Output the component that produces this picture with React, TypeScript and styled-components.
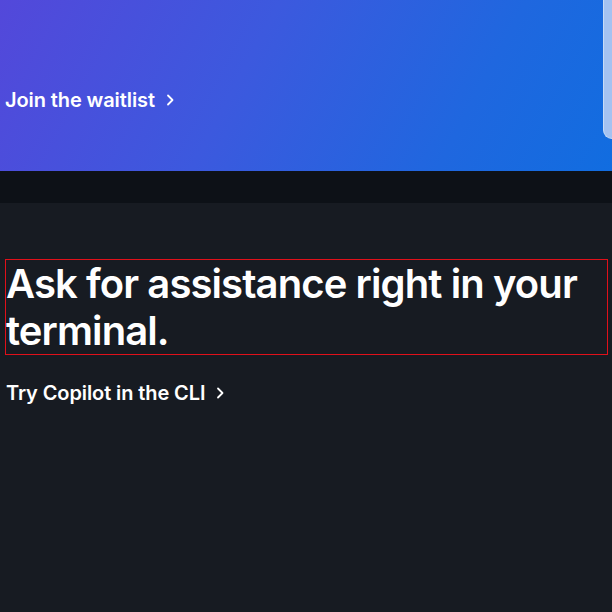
import React from "react";
import styled, { createGlobalStyle } from "styled-components";

const Global = createGlobalStyle`
  html, body { margin: 0; padding: 0; background: #161b22; }
  body { font-family: Inter, "Noto Sans", "Liberation Sans", sans-serif; -webkit-font-smoothing: antialiased; }
`;

const Page = styled.div`
  width: 612px;
  min-height: 612px;
  display: flex;
  flex-direction: column;
  background: #171b22;
  overflow: hidden;
`;

const Hero = styled.section`
  height: 171px;
  display: flex;
  justify-content: space-between;
  align-items: flex-start;
  background: linear-gradient(118deg, #5348da 0%, #3c59de 40%, #1f67df 75%, #116de0 100%);
  overflow: hidden;
`;

const HeroContent = styled.div`
  height: 100%;
  box-sizing: border-box;
  display: flex;
  align-items: center;
  padding: 28px 0 0 5px;
`;

const Card = styled.div`
  width: 9px;
  height: 139px;
  flex-shrink: 0;
  box-sizing: border-box;
  background: #a4c2f1;
  border-left: 1px solid #c6dbf7;
  border-bottom: 1px solid #c6dbf7;
  border-bottom-left-radius: 12px;
`;

const Band = styled.div`
  height: 32px;
  background: #0d1117;
`;

const Section = styled.section`
  padding: 56px 4px 0 5px;
  display: flex;
  flex-direction: column;
  align-items: flex-start;
`;

const Heading = styled.h2`
  margin: 0;
  width: 100%;
  box-sizing: border-box;
  border: 1px solid #e0101a;
  font-size: 40px;
  line-height: 47px;
  font-weight: 600;
  letter-spacing: -0.9px;
  color: #ffffff;
`;

const Link = styled.a<{ $mt?: number }>`
  display: inline-flex;
  align-items: center;
  gap: 10px;
  margin-top: ${(p) => p.$mt ?? 0}px;
  padding-left: ${(p) => (p.$mt ? 1 : 0)}px;
  font-size: 20px;
  line-height: 28px;
  font-weight: 600;
  letter-spacing: -0.1px;
  color: #ffffff;
  text-decoration: none;
`;

const Chevron = () => (
  <svg width="10" height="14" viewBox="0 0 10 14" fill="none">
    <path d="M3 2.5 L7.5 7 L3 11.5" stroke="#fff" strokeWidth="1.8" strokeLinecap="round" strokeLinejoin="round" />
  </svg>
);

export default function App() {
  return (
    <Page>
      <Global />
      <Hero>
        <HeroContent>
          <Link href="#">
            Join the waitlist <Chevron />
          </Link>
        </HeroContent>
        <Card />
      </Hero>
      <Band />
      <Section>
        <Heading>Ask for assistance right in your terminal.</Heading>
        <Link href="#" $mt={24}>
          Try Copilot in the CLI <Chevron />
        </Link>
      </Section>
    </Page>
  );
}
